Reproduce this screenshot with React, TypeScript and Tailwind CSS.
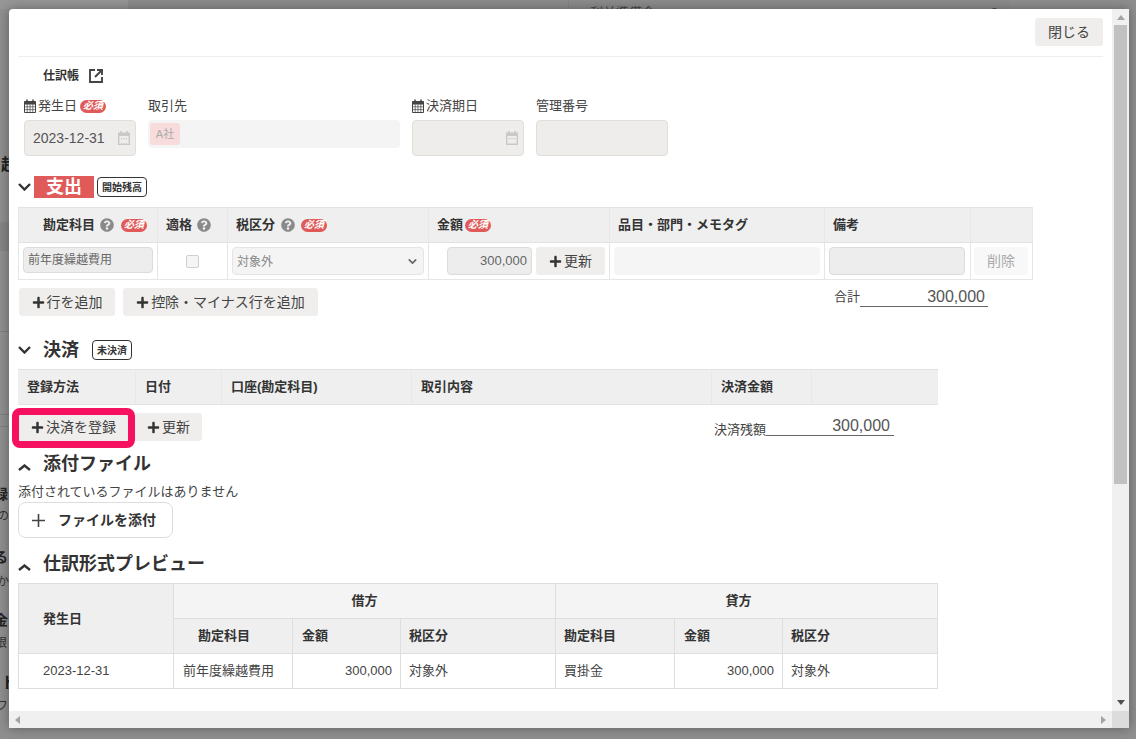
import type { ReactNode } from "react";
import { ChevronDown } from "lucide-react";
import { FaPlus, FaQuestionCircle } from "react-icons/fa";

const Required = () => (
  <span className="inline-flex h-[13px] w-[26px] items-center justify-center rounded-full bg-[#e05a5a] text-[10px] font-bold italic leading-none text-white">
    必須
  </span>
);

const Help = () => <FaQuestionCircle className="h-[14px] w-[14px] text-[#8a8a8a]" />;

const CalendarLine = () => (
  <svg viewBox="0 0 12 14" className="mb-[1px] h-[14px] w-[12px] shrink-0 text-[#444]" fill="none" stroke="currentColor" strokeWidth="1">
    <path d="M.5 2.5h11v11H.5z" />
    <path d="M.5 3h11v2H.5z" fill="currentColor" />
    <path d="M.5 7.8h11M.5 10.6h11M3.2 5v8.5M6 5v8.5M8.8 5v8.5" strokeWidth="0.7" />
    <path d="M3 .5v2.5M9 .5V3" strokeWidth="1.5" />
  </svg>
);

const CalendarFilled = () => (
  <svg viewBox="0 0 12 14" className="h-[14px] w-[12px] text-[#c9c9c9]" fill="currentColor">
    <path d="M2 0h1.6v1.5h4.8V0H10v1.5h2V14H0V1.5h2zM1.4 5v7.6h9.2V5z" />
    <path d="M3 7h1.2v1.2H3zM5.4 7h1.2v1.2H5.4zM7.8 7H9v1.2H7.8z" />
  </svg>
);

const OpenInNew = () => (
  <svg viewBox="0 0 14 14" className="h-[14px] w-[14px] text-[#444]" fill="none" stroke="currentColor" strokeWidth="1.9">
    <path d="M6 1H1v12h12V8" />
    <path d="M8 1h5v5M13 1 6 8" />
  </svg>
);

const Tag = ({ children, width }: { children: ReactNode; width: string }) => (
  <span className={`inline-flex h-[20px] items-center justify-center rounded-[4px] border border-[#333] bg-white text-[10px] font-bold text-[#333] ${width}`}>
    {children}
  </span>
);

const Btn = ({ children, className = "" }: { children: ReactNode; className?: string }) => (
  <button className={`flex h-[28px] items-center justify-center gap-[2px] rounded-[3px] bg-[#efeeec] text-[14px] text-[#444] ${className}`}>
    <FaPlus className="h-[13px] w-[13px] text-[#333]" />
    {children}
  </button>
);

const SectionTitle = ({ open, children }: { open: boolean; children: ReactNode }) => (
  <div className="flex items-center">
    <span className="flex w-[25px] justify-start">
      {open ? (
        <svg viewBox="0 0 13 8" className="h-[8px] w-[13px] text-[#333]" fill="none" stroke="currentColor" strokeWidth="2.4">
          <path d="M1 1l5.5 5.5L12 1" />
        </svg>
      ) : (
        <svg viewBox="0 0 13 7" className="mt-[7px] h-[7px] w-[13px] text-[#333]" fill="none" stroke="currentColor" strokeWidth="2.4">
          <path d="M1 6l5.5-4.5L12 6" />
        </svg>
      )}
    </span>
    {children}
  </div>
);

const th = "border-y border-x border-y-[#e2e2e2] border-x-[#e8e8e8] bg-[#efefef] px-0 text-[13px] font-bold text-[#333]";
const td = "border border-[#e6e6e6] p-0 text-[13px] text-[#444]";

function JournalTable() {
  return (
    <table className="w-[1014px] table-fixed border-collapse">
      <colgroup>
        <col className="w-[139px]" />
        <col className="w-[70px]" />
        <col className="w-[201px]" />
        <col className="w-[181px]" />
        <col className="w-[215px]" />
        <col className="w-[146px]" />
        <col className="w-[62px]" />
      </colgroup>
      <thead>
        <tr className="h-[35px]">
          <th className={th}>
            <div className="flex items-center pl-[24px]">
              勘定科目
              <span className="ml-[5px]"><Help /></span>
              <span className="ml-[7px] flex"><Required /></span>
            </div>
          </th>
          <th className={th}>
            <div className="flex items-center gap-[5px] pl-[8px]">適格 <Help /></div>
          </th>
          <th className={th}>
            <div className="flex items-center gap-[6px] pl-[8px]">税区分 <Help /> <Required /></div>
          </th>
          <th className={th}>
            <div className="flex items-center pl-[8px]">金額<span className="ml-[2px] flex"><Required /></span></div>
          </th>
          <th className={`${th} pl-[8px] text-left`}>品目・部門・メモタグ</th>
          <th className={`${th} pl-[8px] text-left`}>備考</th>
          <th className={th}></th>
        </tr>
      </thead>
      <tbody>
        <tr className="h-[37px]">
          <td className={td}>
            <div className="mb-[2px] ml-[4px] flex h-[26px] w-[130px] items-center rounded-[4px] border border-[#dcdcdc] bg-[#ededed] pl-[4px] text-[12px] text-[#666]">前年度繰越費用</div>
          </td>
          <td className={td}>
            <div className="ml-[28px] h-[13px] w-[13px] rounded-[2px] border border-[#cfcfcf] bg-[#f5f5f5]" />
          </td>
          <td className={td}>
            <div className="ml-[4px] flex h-[28px] w-[192px] items-center justify-between rounded-[4px] border border-[#e4e4e4] bg-[#f4f4f4] pl-[4px] pr-[4px] text-[12px] text-[#888]">
              <span className="mt-[2px]">対象外</span>
              <ChevronDown className="h-[13px] w-[13px] text-[#666]" strokeWidth={3} />
            </div>
          </td>
          <td className={td}>
            <div className="flex items-center pl-[18px]">
              <div className="flex h-[28px] w-[85px] items-center justify-end rounded-[4px] border border-[#dcdcdc] bg-[#ededed] pr-[4px] text-[#666]">300,000</div>
              <Btn className="ml-[4px] w-[69px]">更新</Btn>
            </div>
          </td>
          <td className={td}>
            <div className="ml-[4px] h-[28px] w-[206px] rounded-[4px] bg-[#f5f5f5]" />
          </td>
          <td className={td}>
            <div className="ml-[4px] h-[28px] w-[136px] rounded-[4px] border border-[#dcdcdc] bg-[#ededed]" />
          </td>
          <td className={td}>
            <div className="ml-[3px] flex h-[28px] w-[54px] items-center justify-center rounded-[3px] bg-[#f8f8f8] text-[14px] text-[#aaa]">削除</div>
          </td>
        </tr>
      </tbody>
    </table>
  );
}

function PaymentTable() {
  const head = [
    ["登録方法", "w-[118px]", "pl-[9px]"],
    ["日付", "w-[86px]", "pl-[9px]"],
    ["口座(勘定科目)", "w-[190px]", "pl-[9px]"],
    ["取引内容", "w-[300px]", "pl-[9px]"],
    ["決済金額", "w-[100px]", "pl-[9px]"],
    ["", "w-[126px]", ""],
  ];
  return (
    <div className="flex h-[36px] w-[920px] border-y border-[#e2e2e2] bg-[#efefef] text-[13px] font-bold text-[#333]">
      {head.map(([label, w, pad], i) => (
        <div key={i} className={`flex items-center border-r border-[#e8e8e8] last:border-r-0 ${w} ${pad}`}>
          {label}
        </div>
      ))}
    </div>
  );
}

function PreviewTable() {
  const sub = "border border-[#dedede] bg-[#efefef] text-[13px] font-bold text-[#333]";
  const top = "border border-[#dedede] bg-[#f5f4f4] text-center text-[13px] font-bold text-[#333]";
  const cell = "border border-[#dedede] px-[8px] text-[13px] text-[#444]";
  return (
    <table className="w-[919px] table-fixed border-collapse">
      <colgroup>
        <col className="w-[155px]" />
        <col className="w-[119px]" />
        <col className="w-[108px]" />
        <col className="w-[155px]" />
        <col className="w-[119px]" />
        <col className="w-[108px]" />
        <col className="w-[155px]" />
      </colgroup>
      <thead>
        <tr className="h-[35px]">
          <th rowSpan={2} className={`${sub} pl-[24px] text-left`}>発生日</th>
          <th colSpan={3} className={top}>借方</th>
          <th colSpan={3} className={`${top} pr-[16px]`}>貸方</th>
        </tr>
        <tr className="h-[35px]">
          <th className={`${sub} pl-[24px] text-left`}>勘定科目</th>
          <th className={`${sub} pl-[9px] text-left`}>金額</th>
          <th className={`${sub} pl-[8px] text-left`}>税区分</th>
          <th className={`${sub} pl-[8px] text-left`}>勘定科目</th>
          <th className={`${sub} pl-[9px] text-left`}>金額</th>
          <th className={`${sub} pl-[8px] text-left`}>税区分</th>
        </tr>
      </thead>
      <tbody>
        <tr className="h-[35px]">
          <td className={`${cell} pl-[24px]`}>2023-12-31</td>
          <td className={`${cell} pl-[9px]`}>前年度繰越費用</td>
          <td className={`${cell} text-right`}>300,000</td>
          <td className={cell}>対象外</td>
          <td className={cell}>買掛金</td>
          <td className={`${cell} text-right`}>300,000</td>
          <td className={cell}>対象外</td>
        </tr>
      </tbody>
    </table>
  );
}

function Modal() {
  return (
    <div className="absolute left-[9px] top-[9px] flex h-[719px] w-[1120px] flex-col bg-white shadow-[0_0_12px_rgba(0,0,0,0.35)] [border-top-left-radius:4px]">
      <div className="flex min-h-0 flex-1">
        <div className="relative w-[1103px] overflow-hidden pl-[9px]">
          {/* header */}
          <div className="flex h-[48px] w-[1085px] items-start justify-end border-b border-[#eeeeee] pt-[9px]">
            <button className="h-[28px] w-[68px] rounded-[3px] bg-[#efeeec] text-[14px] text-[#444]">閉じる</button>
          </div>

          <div className="mt-[11px] flex h-[16px] items-center pl-[25px] text-[12px] font-bold text-[#333]">
            仕訳帳
            <span className="ml-[10px]"><OpenInNew /></span>
          </div>

          {/* form fields */}
          <div className="ml-[6px] mt-[14px] flex items-start gap-[12px] text-[13px] text-[#444]">
            <div className="w-[112px]">
              <div className="flex h-[16px] items-center gap-[2px]">
                <CalendarLine />発生日<span className="ml-[1px] flex"><Required /></span>
              </div>
              <div className="mt-[6px] flex h-[36px] items-center justify-between rounded-[4px] border border-[#e2ded8] bg-[#eeedeb] pl-[8px] pr-[5px] text-[14px] text-[#555]">
                2023-12-31
                <CalendarFilled />
              </div>
            </div>
            <div className="w-[252px]">
              <div className="flex h-[16px] items-center">取引先</div>
              <div className="mt-[6px] flex h-[28px] items-center rounded-[4px] bg-[#f4f4f4] pl-[2px]">
                <span className="flex h-[22px] w-[30px] items-center justify-center rounded-[3px] bg-[#f8dcdc] text-[11px] text-[#aaa]">A社</span>
              </div>
            </div>
            <div className="w-[112px]">
              <div className="flex h-[16px] items-center gap-[2px]"><CalendarLine />決済期日</div>
              <div className="mt-[6px] flex h-[36px] items-center justify-end rounded-[4px] border border-[#e2ded8] bg-[#eeedeb] pr-[5px]">
                <CalendarFilled />
              </div>
            </div>
            <div className="w-[132px]">
              <div className="flex h-[16px] items-center">管理番号</div>
              <div className="mt-[6px] h-[36px] rounded-[4px] border border-[#e2ded8] bg-[#eeedeb]" />
            </div>
          </div>

          {/* 支出 */}
          <div className="mt-[20px]">
            <SectionTitle open={true}>
              <span className="-ml-[9px] flex h-[22px] w-[60px] items-center justify-center bg-[#e05a5a] text-[18px] font-bold text-white">支出</span>
              <span className="ml-[3px] flex"><Tag width="w-[50px]">開始残高</Tag></span>
            </SectionTitle>
          </div>
          <div className="mt-[9px]"><JournalTable /></div>
          <div className="mt-[8px] flex w-[970px] items-start">
            <Btn className="ml-[1px] w-[96px]">行を追加</Btn>
            <Btn className="ml-[8px] w-[195px]">控除・マイナス行を追加</Btn>
            <div className="ml-[516px] flex h-[19px] items-end">
              <span className="mb-[1px] text-[13px] leading-[18px] text-[#444]">合計</span>
              <span className="w-[128px] border-b border-[#666] pr-[3px] text-right text-[16px] leading-[18px] text-[#555]">300,000</span>
            </div>
          </div>

          {/* 決済 */}
          <div className="mt-[23px]">
            <SectionTitle open={true}>
              <span className="text-[18px] font-bold leading-[22px] text-[#333]">決済</span>
              <span className="ml-[13px] flex"><Tag width="w-[40px]">未決済</Tag></span>
            </SectionTitle>
          </div>
          <div className="mt-[8px]"><PaymentTable /></div>
          <div className="relative mt-[8px] flex w-[885px] items-start">
            <Btn className="ml-[1px] w-[109px]">決済を登録</Btn>
            <Btn className="ml-[7px] w-[67px]">更新</Btn>
            <div className="ml-[512px] flex h-[23px] items-end">
              <span className="-mb-[1px] text-[13px] leading-[15px] text-[#444]">決済残額</span>
              <span className="w-[128px] border-b border-[#666] pr-[4px] text-right text-[16px] leading-[18px] text-[#555]">300,000</span>
            </div>
            <div className="pointer-events-none absolute -top-[5px] left-[-6px] h-[40px] w-[123px] rounded-[8px] border-[7px] border-[#f5115f]" />
          </div>

          {/* 添付ファイル */}
          <div className="mt-[12px]">
            <SectionTitle open={false}>
              <span className="text-[18px] font-bold leading-[22px] text-[#333]">添付ファイル</span>
            </SectionTitle>
          </div>
          <div className="mt-[9px] text-[13px] leading-[16px] text-[#444]">添付されているファイルはありません</div>
          <button className="mt-[2px] flex h-[36px] w-[155px] items-center rounded-[8px] border border-[#dddddd] bg-white pl-[13px] text-[14px] font-bold text-[#333]">
            <svg viewBox="0 0 13 13" className="h-[13px] w-[13px] text-[#444]" fill="none" stroke="currentColor" strokeWidth="1.6">
              <path d="M6.5 0v13M0 6.5h13" />
            </svg>
            <span className="ml-[13px]">ファイルを添付</span>
          </button>

          {/* 仕訳形式プレビュー */}
          <div className="mt-[15px]">
            <SectionTitle open={false}>
              <span className="text-[18px] font-bold leading-[22px] text-[#333]">仕訳形式プレビュー</span>
            </SectionTitle>
          </div>
          <div className="mt-[8px]"><PreviewTable /></div>
        </div>

        {/* vertical scrollbar */}
        <div className="flex w-[17px] flex-col items-center bg-[#f0f0f0]">
          <svg viewBox="0 0 8 5" className="mt-[6px] h-[5px] w-[8px] text-[#a3a3a3]" fill="currentColor"><path d="M4 0 8 5H0z" /></svg>
          <div className="mt-[5px] h-[459px] w-[13px] bg-[#c1c1c1]" />
          <svg viewBox="0 0 8 5" className="mb-[6px] mt-auto h-[5px] w-[8px] text-[#505050]" fill="currentColor"><path d="M0 0h8L4 5z" /></svg>
        </div>
      </div>

      {/* horizontal scrollbar */}
      <div className="flex h-[17px] shrink-0 bg-[#f0f0f0]">
        <div className="flex w-[1103px] items-center justify-between px-[6px]">
          <svg viewBox="0 0 5 8" className="h-[8px] w-[5px] text-[#a3a3a3]" fill="currentColor"><path d="M5 0v8L0 4z" /></svg>
          <svg viewBox="0 0 5 8" className="h-[8px] w-[5px] text-[#a3a3a3]" fill="currentColor"><path d="M0 0v8l5-4z" /></svg>
        </div>
        <div className="w-[17px] bg-[#dcdcdc]" />
      </div>
    </div>
  );
}

export default function App() {
  return (
    <div className="relative h-[739px] w-[1136px] overflow-hidden bg-[#8f8f8f] font-['Liberation_Sans','Noto_Sans_CJK_JP',sans-serif]">
      {/* dimmed page behind the dialog */}
      <div className="flex h-[9px] overflow-hidden">
        <div className="w-[128px] bg-[#969696]" />
        <div className="w-[441px] border-r border-[#858585] bg-[#8c8c8c]" />
        <div className="flex w-[440px] justify-between bg-[#8c8c8c] pl-[21px] pr-[11px] pt-[3px] text-[13px] text-[#444]">
          <span>利益準備金</span>
          <span>0</span>
        </div>
      </div>
      <div className="flex w-[9px] flex-col overflow-hidden whitespace-nowrap leading-[16px]">
        <span className="ml-[1px] mt-[148px] text-[16px] font-bold text-[#222]">超</span>
        <div className="mt-[49px] h-[29px] shrink-0 bg-[#858585]" />
        <div className="mt-[80px] h-px shrink-0 bg-[#808080]" />
        <div className="mt-[82px] h-px shrink-0 bg-[#808080]" />
        <div className="mt-[11px] h-px shrink-0 bg-[#808080]" />
        <span className="-ml-[6px] mt-[59px] text-[14px] font-bold text-[#222]">録</span>
        <span className="-ml-[3px] mt-[6px] text-[12px] text-[#333]">の</span>
        <span className="-ml-[6px] mt-[25px] text-[14px] font-bold text-[#222]">る</span>
        <span className="-ml-[3px] mt-[9px] text-[12px] text-[#333]">か</span>
        <span className="-ml-[6px] mt-[22px] text-[14px] font-bold text-[#222]">金</span>
        <span className="-ml-[5px] mt-[7px] text-[12px] text-[#333]">限</span>
        <span className="ml-[1px] mt-[24px] text-[16px] font-bold text-[#222]">ト</span>
        <span className="-ml-[4px] mt-[7px] text-[12px] text-[#333]">フ</span>
      </div>
      <Modal />
    </div>
  );
}
